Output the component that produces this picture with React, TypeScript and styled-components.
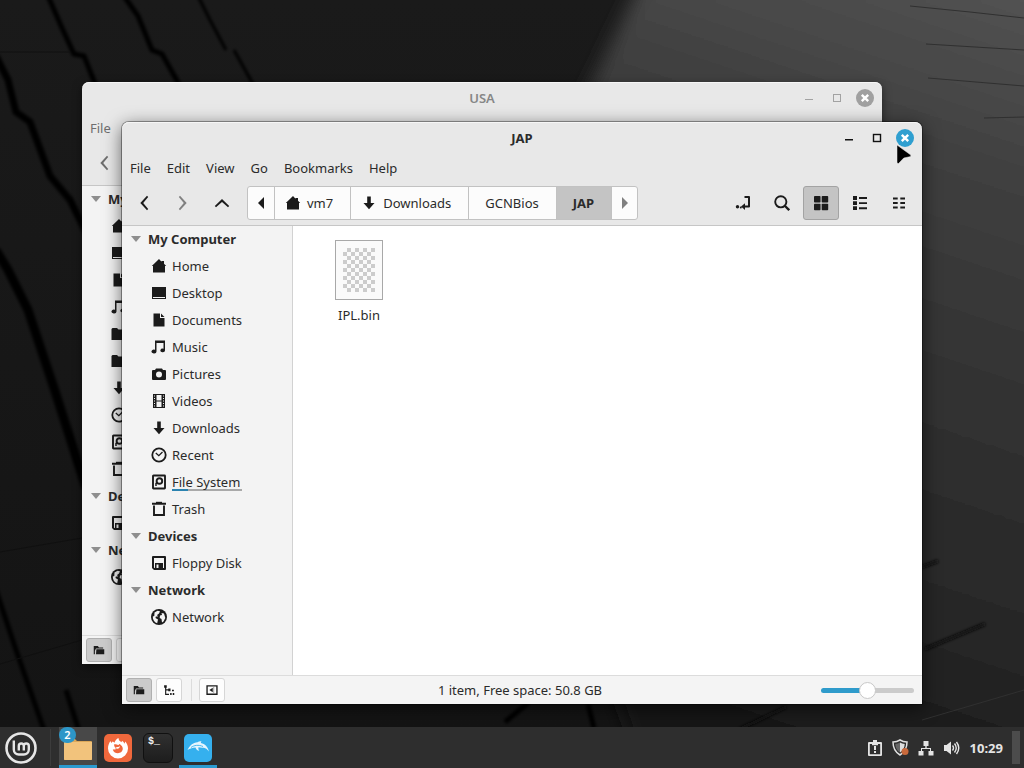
import React from "react";
import styled, { createGlobalStyle } from "styled-components";

const GlobalStyle = createGlobalStyle`
  * { box-sizing: border-box; }
  body { margin: 0; background: #161616; }
  body, button, input { font-family: "Noto Sans", "Open Sans", sans-serif; font-size: 13px; }
  button { border: 0; padding: 0; margin: 0; background: none; color: inherit; }
  a { color: inherit; text-decoration: none; }
  svg { display: block; flex: none; }
`;

/* ---------- icons ---------- */

const IconSvg = styled.svg<{ $tinted?: boolean }>`
  color: ${(p) => (p.$tinted ? "inherit" : "#1b1b1b")};
`;

const icons: Record<string, React.ReactNode> = {
  home: <path d="M8 1 .8 8H2v6.500h12V8h1.200L13 5.800V3h-2.500v.8z" />,
  desktop: (
    <>
      <rect x="1" y="2" width="14" height="12" />
      <path d="M2 12h12v1H2z" fill="#f3f3f3" />
    </>
  ),
  document: <path d="M2.500 1.500H9V6h4.500v8.500h-11zM10 1.500 13.500 5H10z" />,
  music: <path d="M4 1.500h10v10a2.300 1.800 0 1 1-1.500-1.700V4H5.500v8.500A2.500 1.900 0 1 1 4 10.800z" />,
  camera: <path fillRule="evenodd" d="M5 2.500h6l1 1.500h2a1 1 0 0 1 1 1v8a1 1 0 0 1-1 1H2a1 1 0 0 1-1-1V5a1 1 0 0 1 1-1h2zM8 5.500a3 3 0 1 0 0 6 3 3 0 0 0 0-6z" />,
  video: (
    <path
      fillRule="evenodd"
      d="M2 1h12v14H2zM5.500 2v5.500h5V2zM5.500 8.500V14h5V8.500zM3 2.500v1h1v-1zM3 5v1h1V5zM3 7.500v1h1v-1zM3 10v1h1v-1zM3 12.500v1h1v-1zM12 2.500v1h1v-1zM12 5v1h1V5zM12 7.500v1h1v-1zM12 10v1h1v-1zM12 12.500v1h1v-1z"
    />
  ),
  download: <path d="M6.200 1.500h3.600V8h3.700L8 14.300 2.500 8h3.700z" />,
  recent: (
    <g fill="none" stroke="currentColor">
      <circle cx="8" cy="8" r="6.700" strokeWidth="1.800" />
      <path d="m4.800 6 3 2.700L11.500 5" strokeWidth="1.300" />
    </g>
  ),
  drive: (
    <g fill="none" stroke="currentColor" strokeWidth="1.900">
      <rect x="2" y="1.500" width="12" height="13" rx=".5" />
      <circle cx="8.400" cy="7" r="2.800" />
      <path d="M5 12V9.500l2-1" strokeWidth="1.500" />
    </g>
  ),
  trash: (
    <g fill="none" stroke="currentColor" strokeWidth="1.900">
      <path d="M1 2.800h14M3 4.500V14h10V4.500" />
      <path d="M5 1.500h6" strokeWidth="1.400" />
    </g>
  ),
  floppy: (
    <path
      fillRule="evenodd"
      d="M2 1h12a1 1 0 0 1 1 1v12a1 1 0 0 1-1 1H3l-2-2V2a1 1 0 0 1 1-1zM3 3v9.500l.5.5H4V8h8v5h1V3zM5.500 9.500V13h2V9.500z"
    />
  ),
  globe: (
    <>
      <circle cx="8" cy="8" r="8" />
      <path
        fill="#f3f3f3"
        d="M3.500 3.500 6.500 1.800l2.500.4-1 2.300-2 1.500 1 1.500H4.800l-.3 1.500L7 10.500l-.8 3.700C3 13.200 1.700 10.500 1.800 7.500L3.300 7zM10.500 4l2.500.5 1.300 4.500-1.800 3.500-1.500 1-.5-3.500-1.800-1L9 6.500l2-.5z"
      />
    </>
  ),
  folder: <path d="M1 2.500h5.500L8 4.500h5.500V6H4L2.500 9v4.500H1zM4.500 7H15v6.500H4z" />,
  solidFolder: <path d="M.5 3 1.500 2H6l1.500 1.500h8V14H.5z" />,
  tree: (
    <path d="M1.500 1.500h3.500v3.500H1.500zM2.800 5h1.500v2H7V6h3v3.500H7V8.500H4.300V13H8v1.500H2.800zM9.500 12h2v2.500h-2zM12 7.500h2.500v2H12zM13 12h2v2.500h-2z" />
  ),
  collapse: (
    <>
      <path fillRule="evenodd" d="M.5 1.500h15v13H.5zM2.300 3.300v9.400h11.400V3.300z" />
      <path d="M9 5v6L4.500 8z" />
      <path d="M9.500 4h1.500v8H9.500z" opacity=".35" />
    </>
  ),
  prev: <path d="M11 .8 4.300 8l6.700 7.200 1.200-1.200L7.200 8l5-6z" />,
  next: <path d="M5 .8 11.700 8 5 15.200 3.800 14l5-6-5-6z" />,
  up: <path d="M8 4 .8 11 2 12.200l6-5.300 6 5.300 1.200-1.200z" />,
  triLeft: <path d="M11 2v12L5 8z" />,
  triRight: <path d="M5 2v12L11 8z" />,
  location: (
    <>
      <path d="M9.500 1h4.500a1 1 0 0 1 1 1v9.500a1 1 0 0 1-1 1H9.500v-2H13V3H9.500z" />
      <path d="M10 8.200V15L6 11.500z" />
      <circle cx="2.500" cy="11.700" r="1.700" />
      <circle cx="5.800" cy="12.500" r="1" />
    </>
  ),
  search: (
    <g fill="none" stroke="currentColor">
      <circle cx="6.800" cy="6.800" r="5.600" strokeWidth="1.900" />
      <path d="m11 11 4.200 4.200" strokeWidth="2.300" />
    </g>
  ),
  grid: (
    <>
      <rect x="1" y="1" width="6.500" height="6.500" rx=".8" />
      <rect x="8.700" y="1" width="6.500" height="6.500" rx=".8" />
      <rect x="1" y="8.700" width="6.500" height="6.500" rx=".8" />
      <rect x="8.700" y="8.700" width="6.500" height="6.500" rx=".8" />
    </>
  ),
  list: <path d="M1 1h4v4H1zM1 6.200h4v3.800H1zM1 11.300h4V15H1zM7 2h8v1.900H7zM7 7.200h8v1.900H7zM7 12.300h8v1.900H7z" />,
  compact: (
    <path d="M2 2.500h4.700v1.900H2zM2 7h4.700v1.900H2zM2 11.500h4.700v1.900H2zM9.300 2.500H14v1.900H9.300zM9.300 7H14v1.900H9.300zM9.300 11.500H14v1.900H9.300z" />
  ),
};

const Icon = ({ name, size = 16, tinted }: { name: string; size?: number; tinted?: boolean }) => (
  <IconSvg $tinted={tinted} width={size} height={size} viewBox="0 0 16 16" fill="currentColor" aria-hidden="true">
    {icons[name]}
  </IconSvg>
);

/* ---------- desktop ---------- */

const Screen = styled.div`
  display: flex;
  flex-direction: column;
  min-height: 100vh;
`;

const Workspace = styled.main`
  position: relative;
  flex: 1;
  min-height: 727px;
  overflow: hidden;
  background: #161616;
`;

const WallpaperSvg = styled.svg`
  position: absolute;
  inset: 0;
  width: 100%;
  height: 100%;
`;

const Wallpaper = () => (
  <WallpaperSvg viewBox="0 0 1024 727" preserveAspectRatio="none" aria-hidden="true">
    <defs>
      <linearGradient id="shade" x1="0" y1="0" x2="0" y2="1">
        <stop offset="0" stopColor="#1a1a1a" />
        <stop offset="1" stopColor="#141414" />
      </linearGradient>
      <linearGradient id="plane" gradientUnits="userSpaceOnUse" x1="1024" y1="0" x2="780" y2="727">
        <stop offset="0" stopColor="#525252" />
        <stop offset=".25" stopColor="#3e3e3e" />
        <stop offset=".55" stopColor="#303030" />
        <stop offset=".8" stopColor="#272727" />
        <stop offset="1" stopColor="#191919" />
      </linearGradient>
      <filter id="soft"><feGaussianBlur stdDeviation="9" /></filter>
      <filter id="crack"><feGaussianBlur stdDeviation="1.500" /></filter>
    </defs>
    <rect width="1024" height="727" fill="url(#shade)" />
    <path d="M642-20 592 82 480 320 640 760H1064V-20z" fill="url(#plane)" filter="url(#soft)" />
    <g fill="none" stroke="#060606" strokeWidth="5" filter="url(#crack)">
      <path d="M48-4 62 28l12 26 10 2 12 30" />
      <path d="m124-4 14 20 14 34 10 4 18 32" />
      <path d="m198-4 12 24 16 30M234 50l20 36" strokeWidth="3" />
      <path d="m-4 56 12 24 8 32 14 10 20 54 20 24 18 36" strokeWidth="7" />
      <path d="m-4 250 12 20 20 40 26 78 32 100" strokeWidth="9" />
      <path d="m-4 590 20 60 28 80" />
      <path d="m66 690 14 44M588 704l6 24" />
      <path d="M505 722l24-20" />
    </g>
    <path d="M0 552l82-14M0 52h70M0 664l82-24" stroke="#101010" fill="none" />
    <path d="m740 729 46-22M925 649l60-25M922 567l16-6" stroke="#0b0b0b" strokeWidth="3" fill="none" filter="url(#crack)" />
    <path
      d="m910 6 60 6 54 6M926 44l98 6M928 78l96 8M984 118l40-1M922 720l102-30"
      stroke="#303030"
      strokeWidth="1"
      fill="none"
    />
  </WallpaperSvg>
);

/* ---------- window ---------- */

const WindowFrame = styled.section<{ $x: number; $y: number; $active: boolean }>`
  position: absolute;
  left: ${(p) => p.$x}px;
  top: ${(p) => p.$y}px;
  width: calc(100% - 224px);
  color: #2b2b2b;
  border-radius: 7px 7px 0 0;
  box-shadow: ${(p) =>
    p.$active
      ? "0 0 0 1px rgba(0,0,0,0.35), 0 4px 18px rgba(0,0,0,0.6)"
      : "0 3px 10px rgba(0,0,0,0.5)"};
`;

const Chrome = styled.header<{ $active: boolean }>`
  background: #e8e8e8;
  border-radius: 7px 7px 0 0;
  border-bottom: 1px solid #c6c6c6;
  box-shadow: inset 0 1px 0 #f6f6f6;
  color: ${(p) => (p.$active ? "#2b2b2b" : "#6e6e6e")};
`;

const TitleBar = styled.div`
  display: grid;
  grid-template-columns: 1fr auto 1fr;
  align-items: center;
  height: 32px;
  padding: 0 7px;
`;

const Title = styled.h1<{ $active: boolean }>`
  grid-column: 2;
  margin: 0;
  font-size: 13px;
  line-height: 18px;
  font-weight: ${(p) => (p.$active ? 700 : 600)};
  color: ${(p) => (p.$active ? "#2b2b2b" : "#868686")};
`;

const Controls = styled.div<{ $active: boolean }>`
  display: flex;
  justify-content: flex-end;
  gap: 8px;
  color: ${(p) => (p.$active ? "#111" : "#a2a2a2")};
`;

const ControlButton = styled.button`
  position: relative;
  display: grid;
  place-items: center;
  width: 20px;
  height: 20px;
`;

const Pointer = styled.svg`
  position: absolute;
  left: 1px;
  top: 16px;
`;

const MenuBar = styled.nav`
  display: flex;
  height: 28px;
`;

const MenuButton = styled.button`
  padding: 0 8px;
  line-height: 18px;
`;

const Toolbar = styled.div`
  display: flex;
  align-items: center;
  gap: 3px;
  padding: 4px 5px 5px 4px;
`;

const ToolButton = styled.button<{ $on?: boolean; $muted?: boolean }>`
  display: grid;
  place-items: center;
  width: 36px;
  height: 34px;
  border: 1px solid ${(p) => (p.$on ? "#a3a3a3" : "transparent")};
  border-radius: 3px;
  background: ${(p) => (p.$on ? "#c4c4c4" : "transparent")};
  opacity: ${(p) => (p.$muted ? 0.5 : 1)};
`;

const PathBar = styled.nav`
  display: flex;
  height: 34px;
  margin: 0 auto 0 4px;
  border: 1px solid #c2c2c2;
  border-radius: 3px;
  background: #fcfcfc;
`;

const Crumb = styled.button<{ $current?: boolean; $withIcon?: boolean }>`
  display: flex;
  align-items: center;
  gap: 6px;
  padding: 0 17px 0 ${(p) => (p.$withIcon ? 10 : 16)}px;
  font-weight: ${(p) => (p.$current ? 700 : 400)};
  background: ${(p) => (p.$current ? "#c4c4c4" : "transparent")};
  border-left: 1px solid #c2c2c2;
`;

const PathArrow = styled.button<{ $end?: boolean }>`
  display: grid;
  place-items: center;
  width: 26px;
  color: ${(p) => (p.$end ? "#808080" : "#1b1b1b")};
  border-left: ${(p) => (p.$end ? "1px solid #c2c2c2" : "0")};
`;

const Body = styled.div`
  display: flex;
  height: 449px;
`;

const Sidebar = styled.aside<{ $narrow?: boolean }>`
  flex: none;
  width: ${(p) => (p.$narrow ? 40 : 171)}px;
  overflow: hidden;
  background: #f3f3f3;
  border-right: ${(p) => (p.$narrow ? "0" : "1px solid #d2d2d2")};
`;

const GroupButton = styled.button`
  display: flex;
  align-items: center;
  gap: 5px;
  width: 100%;
  height: 27px;
  padding: 0 0 2px 8px;
  font-weight: 700;
  text-align: left;
  white-space: nowrap;
`;

const Expander = styled.span`
  flex: none;
  margin: 0 2px 0 1px;
  border: 5px solid transparent;
  border-top: 6px solid #8e8e8e;
  border-bottom: 0;
`;

const PlaceLink = styled.a`
  display: flex;
  align-items: center;
  gap: 5px;
  height: 27px;
  padding: 0 0 2px 29px;
`;

const PlaceName = styled.span<{ $usage?: boolean }>`
  line-height: 18px;
  padding-right: ${(p) => (p.$usage ? 2 : 0)}px;
  background: ${(p) =>
    p.$usage
      ? "linear-gradient(90deg, #2b83b0 16px, #a9a9a9 16px) bottom / 100% 2px no-repeat"
      : "none"};
`;

const FileArea = styled.div`
  flex: 1;
  min-width: 0;
  padding: 14px 8px;
  background: #fff;
`;

const FileItem = styled.figure`
  display: flex;
  flex-direction: column;
  align-items: center;
  gap: 6px;
  width: 116px;
  margin: 0;
`;

const FileCaption = styled.figcaption`
  line-height: 18px;
`;

const StatusBar = styled.footer`
  display: grid;
  grid-template-columns: 1fr auto 1fr;
  align-items: center;
  height: 29px;
  padding: 0 8px 0 4px;
  background: #f4f4f4;
  border-top: 1px solid #dcdcdc;
`;

const StatusTools = styled.div`
  display: flex;
  align-items: center;
  gap: 4px;
`;

const StatusButton = styled.button<{ $on?: boolean }>`
  display: grid;
  place-items: center;
  width: 26px;
  height: 24px;
  border: 1px solid ${(p) => (p.$on ? "#b0b0b0" : "#d6d6d6")};
  border-radius: 3px;
  background: ${(p) => (p.$on ? "#cbcbcb" : "#fdfdfd")};
`;

const StatusDivider = styled.span`
  width: 1px;
  height: 22px;
  margin: 0 3px 0 5px;
  background: #dcdcdc;
`;

const ZoomSlider = styled.input`
  justify-self: end;
  appearance: none;
  width: 93px;
  height: 20px;
  margin: 0;
  background: transparent;
  &::-webkit-slider-runnable-track {
    height: 5px;
    border-radius: 3px;
    background: linear-gradient(90deg, #2f9bcb 50%, #cbcbcb 50%);
  }
  &::-webkit-slider-thumb {
    appearance: none;
    width: 17px;
    height: 17px;
    margin-top: -6px;
    border: 1px solid #c8c8c8;
    border-radius: 50%;
    background: #fff;
  }
`;

const BinFile = () => (
  <svg width="48" height="60" viewBox="0 0 48 60" aria-hidden="true">
    <defs>
      <pattern id="checks" width="8" height="8" patternUnits="userSpaceOnUse" x="8" y="8">
        <rect width="4" height="4" x="4" fill="#cccccc" />
        <rect width="4" height="4" y="4" fill="#cccccc" />
      </pattern>
    </defs>
    <rect x=".5" y=".5" width="47" height="59" fill="#fafafa" stroke="#a8a8a8" />
    <rect x="8" y="8" width="32" height="44" fill="url(#checks)" />
  </svg>
);

type Place = { icon: string; name: string; usage?: boolean };
type CrumbData = { name: string; icon?: string; current?: boolean };

const makeGroups = (mediaIcons: [string, string]): { name: string; places: Place[] }[] => [
  {
    name: "My Computer",
    places: [
      { icon: "home", name: "Home" },
      { icon: "desktop", name: "Desktop" },
      { icon: "document", name: "Documents" },
      { icon: "music", name: "Music" },
      { icon: mediaIcons[0], name: "Pictures" },
      { icon: mediaIcons[1], name: "Videos" },
      { icon: "download", name: "Downloads" },
      { icon: "recent", name: "Recent" },
      { icon: "drive", name: "File System", usage: true },
      { icon: "trash", name: "Trash" },
    ],
  },
  { name: "Devices", places: [{ icon: "floppy", name: "Floppy Disk" }] },
  { name: "Network", places: [{ icon: "globe", name: "Network" }] },
];

const WindowTitleBar = ({ title, active }: { title: string; active: boolean }) => (
  <TitleBar>
    <Title $active={active}>{title}</Title>
    <Controls $active={active}>
      <ControlButton aria-label="Minimize">
        <svg width="10" height="10" viewBox="0 0 10 10">
          <path d={active ? "M1 6h8v1.500H1z" : "M1 6h8v1H1z"} fill="currentColor" />
        </svg>
      </ControlButton>
      <ControlButton aria-label="Maximize">
        <svg width="10" height="10" viewBox="0 0 10 10">
          <rect
            x="1.500"
            y="1.500"
            width="7"
            height="7"
            fill="none"
            stroke="currentColor"
            strokeWidth={active ? 1.4 : 1}
          />
        </svg>
      </ControlButton>
      <ControlButton aria-label="Close">
        <svg width="18" height="18" viewBox="0 0 18 18">
          <circle cx="9" cy="9" r="9" fill={active ? "#2f9fd0" : "#a0a0a0"} />
          <path d="m5.800 5.800 6.400 6.400m0-6.400-6.400 6.400" stroke="#fff" strokeWidth="2.400" />
        </svg>
        {active && (
          <Pointer width="16" height="21" viewBox="0 0 16 21" aria-hidden="true">
            <path d="M1 1v18l1.500.5 5.300-5.500 7-1.500V11z" fill="#000" stroke="#eee" strokeWidth=".5" />
          </Pointer>
        )}
      </ControlButton>
    </Controls>
  </TitleBar>
);

const PlacesTree = ({ mediaIcons, narrow }: { mediaIcons: [string, string]; narrow?: boolean }) => (
  <Sidebar $narrow={narrow}>
    {makeGroups(mediaIcons).map((g) => (
      <React.Fragment key={g.name}>
        <GroupButton aria-label={g.name}>
          <Expander />
          {narrow ? g.name.slice(0, 2) : g.name}
        </GroupButton>
        {g.places.map((p) => (
          <PlaceLink key={p.name} href="#" aria-label={p.name}>
            <Icon name={p.icon} />
            {!narrow && <PlaceName $usage={p.usage}>{p.name}</PlaceName>}
          </PlaceLink>
        ))}
      </React.Fragment>
    ))}
  </Sidebar>
);

const StatusButtons = () => (
  <StatusTools>
    <StatusButton aria-label="Places" $on><Icon name="folder" size={12} /></StatusButton>
    <StatusButton aria-label="Tree"><Icon name="tree" size={12} /></StatusButton>
    <StatusDivider />
    <StatusButton aria-label="Hide sidebar"><Icon name="collapse" size={12} /></StatusButton>
  </StatusTools>
);

const BackgroundWindow = ({ title, x, y }: { title: string; x: number; y: number }) => (
  <WindowFrame $x={x} $y={y} $active={false} aria-label={title}>
    <Chrome $active={false}>
      <WindowTitleBar title={title} active={false} />
      <MenuBar>
        <MenuButton>File</MenuButton>
      </MenuBar>
      <Toolbar>
        <ToolButton aria-label="Back"><Icon name="prev" tinted /></ToolButton>
      </Toolbar>
    </Chrome>
    <Body>
      <PlacesTree mediaIcons={["solidFolder", "solidFolder"]} narrow />
      <FileArea />
    </Body>
    <StatusBar>
      <StatusButtons />
    </StatusBar>
  </WindowFrame>
);

const menus = ["File", "Edit", "View", "Go", "Bookmarks", "Help"];

const FileWindow = ({ title, x, y, crumbs }: { title: string; x: number; y: number; crumbs: CrumbData[] }) => (
  <WindowFrame $x={x} $y={y} $active aria-label={title}>
    <Chrome $active>
      <WindowTitleBar title={title} active />
      <MenuBar>
        {menus.map((m) => (
          <MenuButton key={m}>{m}</MenuButton>
        ))}
      </MenuBar>
      <Toolbar>
        <ToolButton aria-label="Back"><Icon name="prev" /></ToolButton>
        <ToolButton aria-label="Forward" $muted><Icon name="next" /></ToolButton>
        <ToolButton aria-label="Up"><Icon name="up" /></ToolButton>
        <PathBar>
          <PathArrow aria-label="Scroll path left"><Icon name="triLeft" tinted /></PathArrow>
          {crumbs.map((c) => (
            <Crumb key={c.name} $current={c.current} $withIcon={Boolean(c.icon)}>
              {c.icon && <Icon name={c.icon} />}
              {c.name}
            </Crumb>
          ))}
          <PathArrow $end aria-label="Scroll path right"><Icon name="triRight" tinted /></PathArrow>
        </PathBar>
        <ToolButton aria-label="Toggle location entry"><Icon name="location" /></ToolButton>
        <ToolButton aria-label="Search"><Icon name="search" /></ToolButton>
        <ToolButton aria-label="Icon view" $on><Icon name="grid" /></ToolButton>
        <ToolButton aria-label="List view"><Icon name="list" /></ToolButton>
        <ToolButton aria-label="Compact view"><Icon name="compact" /></ToolButton>
      </Toolbar>
    </Chrome>
    <Body>
      <PlacesTree mediaIcons={["camera", "video"]} />
      <FileArea>
        <FileItem>
          <BinFile />
          <FileCaption>IPL.bin</FileCaption>
        </FileItem>
      </FileArea>
    </Body>
    <StatusBar>
      <StatusButtons />
      <span>1 item, Free space: 50.8 GB</span>
      <ZoomSlider type="range" min={0} max={100} defaultValue={50} aria-label="Icon size" />
    </StatusBar>
  </WindowFrame>
);

/* ---------- panel ---------- */

const Panel = styled.footer`
  display: flex;
  align-items: stretch;
  height: 41px;
  padding-right: 4px;
  background: #2e2e2e;
  color: #e4e4e4;
`;

const MintButton = styled.button`
  display: grid;
  place-items: center;
  width: 42px;
`;

const PanelDivider = styled.span`
  width: 1px;
  margin: 2px 8px;
  background: #3c3c3c;
`;

const TaskList = styled.div`
  display: flex;
  gap: 2px;
`;

const TaskButton = styled.button<{ $focused?: boolean; $running?: boolean }>`
  position: relative;
  display: grid;
  place-items: center;
  width: 38px;
  background: ${(p) => (p.$focused ? "#484848" : "transparent")};
  box-shadow: ${(p) => (p.$running ? "inset 0 -3px 0 #2c9ad0" : "none")};
`;

const Badge = styled.span`
  position: absolute;
  left: 0;
  top: 0;
  width: 17px;
  height: 16px;
  border-radius: 8px;
  background: #2c96c8;
  color: #fff;
  font-size: 11px;
  font-weight: 600;
  line-height: 15px;
`;

const TerminalTile = styled.span`
  width: 30px;
  height: 30px;
  padding: 2px 4px;
  border: 1px solid #101010;
  border-radius: 6px;
  background: linear-gradient(#303030, #1d1d1d);
  color: #f2f2f2;
  font: 700 10px/12px "Liberation Mono", monospace;
  text-align: left;
`;

const Tray = styled.div`
  display: flex;
  align-items: center;
  gap: 9px;
  margin-left: auto;
`;

const Clock = styled.time`
  font-weight: 700;
  font-size: 13px;
  margin-left: 1px;
`;

const TrayButton = styled.button`
  display: grid;
  place-items: center;
`;

const ShowDesktop = styled.button`
  width: 8px;
  align-self: stretch;
  margin: 4px 0;
  background: #4c4c4c;
`;

export default function App() {
  return (
    <Screen>
      <GlobalStyle />
      <Workspace>
        <Wallpaper />
        <BackgroundWindow title="USA" x={82} y={82} />
        <FileWindow
          title="JAP"
          x={122}
          y={122}
          crumbs={[
            { name: "vm7", icon: "home" },
            { name: "Downloads", icon: "download" },
            { name: "GCNBios" },
            { name: "JAP", current: true },
          ]}
        />
      </Workspace>
      <Panel>
        <MintButton aria-label="Menu">
          <svg width="32" height="32" viewBox="0 0 32 32" fill="none" stroke="#e6e6e6">
            <circle cx="16" cy="16" r="14.500" strokeWidth="2.600" />
            <path
              d="M8.800 8.500V17.500a5 5 0 0 0 5 5h5a5 5 0 0 0 5-5V14a2.500 2.500 0 0 0-5 0V18.500M18.800 14a2.500 2.500 0 0 0-5 0V18.500"
              strokeWidth="2.400"
            />
          </svg>
        </MintButton>
        <PanelDivider />
        <TaskList>
          <TaskButton aria-label="Files, 2 windows" $focused $running>
            <svg width="30" height="26" viewBox="0 0 30 26">
              <path d="M1 4a1 1 0 0 1 1-1h9l3 3h14a1 1 0 0 1 1 1v17a1 1 0 0 1-1 1H2a1 1 0 0 1-1-1z" fill="#dba759" />
              <path d="M1 7h28v17a1 1 0 0 1-1 1H2a1 1 0 0 1-1-1z" fill="#f2c37c" />
            </svg>
            <Badge>2</Badge>
          </TaskButton>
          <TaskButton aria-label="Firefox">
            <svg width="28" height="28" viewBox="0 0 28 28">
              <rect width="28" height="28" rx="5" fill="#f0683c" />
              <path
                d="M14 24.500a10 10 0 0 1-10-10c0-3 1-5.500 2.500-7.500l.8 2 1.200-1.500c.8.2 1.500.6 2 1.200C11 6.500 12.500 5 14.500 4c0 2 1 3 3 4.200l.5-1.500c1.200.8 2 1.800 2.600 3l.6-2.200c1.800 2 2.800 4.300 2.800 7a10 10 0 0 1-10 10z"
                fill="#fff"
              />
              <path
                d="M10 10.500c1.300-.6 3-.2 4 .5l2.500-.3-2 2.300c-1.500 0-2.800.4-3.300 1.400 1 .8 3.300.6 4.300-1 .4-1 0-2.400-.9-3.400 2.800.8 4.600 3 4.100 5.600-.5 2.300-2.400 3.600-4.700 3.600-2.800 0-4.800-1.600-5.200-4 1.500.5 3 .3 4-.7-1.500-.3-2.600-1.800-2.800-4z"
                fill="#f0683c"
              />
            </svg>
          </TaskButton>
          <TaskButton aria-label="Terminal">
            <TerminalTile>$_</TerminalTile>
          </TaskButton>
          <TaskButton aria-label="Dolphin Emulator" $running>
            <svg width="28" height="28" viewBox="0 0 28 28">
              <rect width="28" height="28" rx="5" fill="#35b0ee" />
              <path
                d="M3.500 16c2-4.500 5.500-7.500 10-7.800 1-.8 2.500-1.200 4-1-.6.600-.8 1.200-.6 1.700 4 1 7 3.700 8 8.600-1.300-2-3-3.200-5.200-3.800-1.800.3-3.700 0-5.200-.4-.3 1.500 0 2.500.8 3.500-2-.2-3.300-1.500-3.800-3.300-2.800.1-5.500 1-8 2.500z"
                fill="#e6f5fd"
              />
              <path d="M7 13.500c3-2.300 7.500-3 12-1" fill="none" stroke="#35b0ee" strokeWidth=".9" />
            </svg>
          </TaskButton>
        </TaskList>
        <Tray>
          <TrayButton aria-label="System reports">
            <svg width="16" height="16" viewBox="0 0 16 16" fill="currentColor">
              <path fillRule="evenodd" d="M2 2h4V0h4v2h4a1 1 0 0 1 1 1v12a1 1 0 0 1-1 1H2a1 1 0 0 1-1-1V3a1 1 0 0 1 1-1zm.8 2v10.200h10.400V4H11v1.200H5V4zM7 6h2v4H7zM7 11h2v2H7z" />
            </svg>
          </TrayButton>
          <TrayButton aria-label="Updates">
            <svg width="17" height="17" viewBox="0 0 17 17">
              <path d="M8 1c2 1.300 4.500 2 7 2 0 6-2 10-7 13C3 13 1 9 1 3c2.500 0 5-.7 7-2z" fill="none" stroke="#e0e0e0" strokeWidth="1.500" />
              <path d="M8 3.500v10C5 11.500 3.500 9 3.300 5 5 4.900 6.700 4.400 8 3.500z" fill="#666" />
              <path d="M8 3.500v10c3-2 4.500-4.500 4.700-8.500C11 4.900 9.300 4.400 8 3.500z" fill="#dedede" />
              <circle cx="13" cy="12.500" r="3.500" fill="#c96a3c" />
            </svg>
          </TrayButton>
          <TrayButton aria-label="Network">
            <svg width="16" height="16" viewBox="0 0 16 16" fill="currentColor">
              <path d="M5.500 1h5v5H8.700v2H13v3h2.500v4.500h-5V11H12V9H4v2h1.500v4.500h-5V11H3V8h4.300V6H5.500z" />
            </svg>
          </TrayButton>
          <TrayButton aria-label="Volume">
            <svg width="17" height="16" viewBox="0 0 17 16">
              <path d="M1 5h2.500L8 1.500v13L3.500 11H1z" fill="currentColor" />
              <path d="M9.500 5.500q2 2.500 0 5M11.500 3.500q3.500 4.500 0 9M13.500 2q4.500 6 0 12" fill="none" stroke="currentColor" strokeWidth="1.400" />
            </svg>
          </TrayButton>
          <Clock>10:29</Clock>
          <ShowDesktop aria-label="Show desktop" />
        </Tray>
      </Panel>
    </Screen>
  );
}
